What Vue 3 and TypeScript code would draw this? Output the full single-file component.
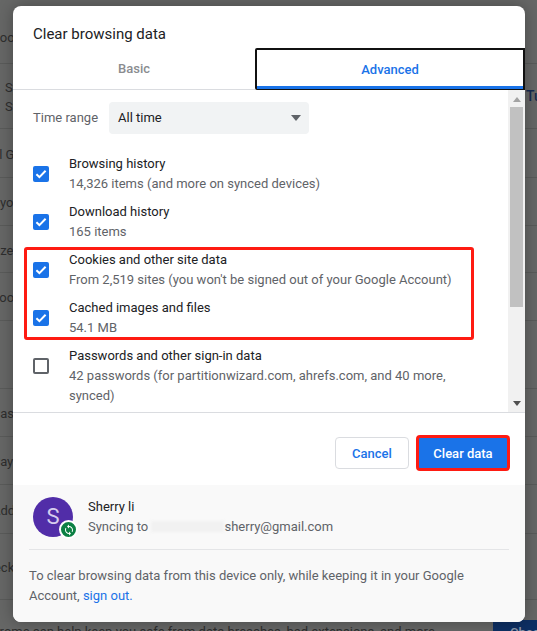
<script setup lang="ts">
interface BgRow { h: number; pad: number; lines: { text: string; x: number }[]; aside?: string }
const bgRows: BgRow[] = [
  { h: 64, pad: 12, lines: [{ text: 'Google', x: -9 }] },
  { h: 65, pad: 2, lines: [{ text: 'Sync', x: 5 }, { text: 'Sync', x: 5 }], aside: 'Turn' },
  { h: 49, pad: 2, lines: [{ text: 'll Google', x: -4 }] },
  { h: 48, pad: 2, lines: [{ text: 'your', x: 0 }] },
  { h: 47, pad: 2, lines: [{ text: 'ize', x: -3 }] },
  { h: 48, pad: 2, lines: [{ text: 'book', x: -8 }] },
  { h: 68, pad: 0, lines: [] },
  { h: 48, pad: 2, lines: [{ text: 'Pass', x: -8 }] },
  { h: 48, pad: 2, lines: [{ text: 'Payment', x: -8 }] },
  { h: 49, pad: 2, lines: [{ text: 'Address', x: -8 }] },
  { h: 66, pad: 2, lines: [{ text: 'check', x: -20 }] },
]
interface Item { title: string; sub: string; checked: boolean }
const items: Item[] = [
  { title: 'Browsing history', sub: '14,326 items (and more on synced devices)', checked: true },
  { title: 'Download history', sub: '165 items', checked: true },
  { title: 'Cookies and other site data', sub: "From 2,519 sites (you won't be signed out of your Google Account)", checked: true },
  { title: 'Cached images and files', sub: '54.1 MB', checked: true },
  { title: 'Passwords and other sign-in data', sub: '42 passwords (for partitionwizard.com, ahrefs.com, and 40 more, synced)', checked: false },
]
</script>

<template>
  <div class="page">
    <div class="bg">
      <div
        v-for="(row, i) in bgRows"
        :key="i"
        class="bg-row"
        :style="{ height: row.h + 'px', paddingTop: row.pad + 'px' }"
      >
        <div class="bg-lines">
          <div v-for="(l, j) in row.lines" :key="j" :style="{ marginLeft: l.x + 'px' }">{{ l.text }}</div>
        </div>
        <div v-if="row.aside" class="bg-aside">{{ row.aside }}</div>
      </div>
      <div class="bg-last">
        <div class="bg-sentence">Chrome can help keep you safe from data breaches, bad extensions, and more</div>
        <div class="bg-btn">Check</div>
      </div>
    </div>

    <div class="dialog">
      <div class="title">Clear browsing data</div>
      <div class="tabs">
        <div class="tab basic">Basic</div>
        <div class="tab advanced">Advanced</div>
      </div>

      <div class="scroll">
        <div class="content">
          <div class="range">
            <span class="range-label">Time range</span>
            <div class="select">
              <span>All time</span>
              <svg width="10" height="6" viewBox="0 0 10 6"><path d="M0 0h10L5 6z" fill="#5f6368" /></svg>
            </div>
          </div>
          <div class="items">
            <div v-for="item in items" :key="item.title" class="item">
              <div class="box" :class="{ on: item.checked }">
                <svg v-if="item.checked" width="16" height="16" viewBox="0 0 16 16">
                  <path d="M3.4 8.3l3 2.8 6.2-6.4" fill="none" stroke="#fff" stroke-width="2" />
                </svg>
              </div>
              <div class="item-text">
                <div class="item-title">{{ item.title }}</div>
                <div class="item-sub">{{ item.sub }}</div>
              </div>
            </div>
          </div>
        </div>
        <div class="frame"></div>
        <div class="bar">
          <svg class="arrow-up" width="8" height="5" viewBox="0 0 8 5"><path d="M0 5h8L4 0z" fill="#a3a3a3" /></svg>
          <div class="thumb"></div>
          <svg class="arrow-down" width="8" height="5" viewBox="0 0 8 5"><path d="M0 0h8L4 5z" fill="#505050" /></svg>
        </div>
      </div>

      <div class="actions">
        <button class="btn cancel">Cancel</button>
        <button class="btn clear">Clear data</button>
      </div>

      <div class="footer">
        <div class="account">
          <div class="avatar">
            S
            <div class="badge">
              <svg width="12" height="12" viewBox="0 0 24 24">
                <path fill="#fff" d="M12 4V1L8 5l4 4V6c3.31 0 6 2.69 6 6 0 1.01-.25 1.97-.7 2.8l1.46 1.46A7.93 7.93 0 0 0 20 12c0-4.42-3.58-8-8-8zm0 14c-3.31 0-6-2.69-6-6 0-1.01.25-1.97.7-2.8L5.24 7.74A7.93 7.93 0 0 0 4 12c0 4.42 3.58 8 8 8v3l4-4-4-4v3z" />
              </svg>
            </div>
          </div>
          <div class="who">
            <div class="name">Sherry li</div>
            <div class="sync">Syncing to <span class="smudge"></span>sherry@gmail.com</div>
          </div>
        </div>
        <div class="note">
          To clear browsing data from this device only, while keeping it in your Google Account,
          <span class="link">sign out.</span>
        </div>
      </div>
    </div>
  </div>
</template>

<style scoped>
.page {
  position: relative;
  width: 537px;
  height: 631px;
  overflow: hidden;
  background: #666766;
  font-family: Roboto, "Liberation Sans", sans-serif;
  font-size: 13px;
  color: #202124;
}
.bg { display: flex; flex-direction: column; color: #2e2e2e; }
.bg-row {
  box-sizing: border-box;
  display: flex;
  align-items: center;
  justify-content: space-between;
  border-bottom: 1px solid #5a5b5a;
  white-space: nowrap;
}
.bg-lines { width: 13px; overflow: hidden; line-height: 19px; }
.bg-aside {
  width: 11px;
  overflow: hidden;
  color: #14294f;
  font-size: 14px;
  font-weight: 500;
  margin-top: -2px;
}
.bg-last {
  display: flex;
  justify-content: space-between;
  white-space: nowrap;
  height: 32px;
  overflow: hidden;
}
.bg-sentence { margin-left: -16px; margin-top: 22px; line-height: 20px; }
.bg-btn {
  box-sizing: border-box;
  margin-top: 20px;
  width: 44px;
  height: 12px;
  padding-left: 17px;
  overflow: hidden;
  background: #0d2f63;
  color: #8b97ab;
  font-weight: 500;
  line-height: 26px;
}

.dialog {
  position: absolute;
  left: 13px;
  top: 6px;
  width: 512px;
  height: 616px;
  display: flex;
  flex-direction: column;
  background: #fff;
  border-radius: 8px;
  overflow: hidden;
  box-shadow: 0 0 16px rgba(0, 0, 0, 0.3);
}
.title {
  height: 42px;
  padding: 19px 0 0 20px;
  box-sizing: border-box;
  font-size: 15px;
  line-height: 18px;
}
.tabs { display: grid; grid-template-columns: 242px 270px; height: 42px; }
.tab {
  display: flex;
  align-items: center;
  justify-content: center;
  font-weight: 500;
  box-sizing: border-box;
}
.basic { color: #8a8c8f; border-bottom: 1px solid #dadce0; }
.advanced {
  color: #1a73e8;
  border: 2px solid #111;
  border-bottom: 1px solid #111;
  border-radius: 2px 0 0 2px;
  box-shadow: inset 0 -3px 0 #1a73e8;
}

.scroll { position: relative; height: 322px; display: flex; overflow: hidden; border-bottom: 1px solid #dadce0; }
.content { flex: 1; min-width: 0; padding-left: 20px; padding-right: 40px; }
.range { display: flex; align-items: center; margin-top: 12px; }
.range-label { width: 76px; color: #5f6368; padding-bottom: 1px; }
.select {
  box-sizing: border-box;
  width: 200px;
  height: 32px;
  padding: 0 8px 1px 9px;
  display: flex;
  align-items: center;
  justify-content: space-between;
  background: #f1f3f4;
  border-radius: 4px;
}
.select svg { margin-top: 1px; }
.items { display: flex; flex-direction: column; gap: 8px; margin-top: 20px; }
.item { display: flex; align-items: flex-start; }
.box {
  box-sizing: border-box;
  flex: none;
  width: 16px;
  height: 16px;
  margin-top: 12px;
  margin-right: 20px;
  border: 2px solid #5f6368;
  border-radius: 2px;
}
.box.on { border: none; background: #1a73e8; }
.box.on svg { display: block; }
.item-text { line-height: 20px; }
.item-sub { color: #5f6368; }

.frame {
  position: absolute;
  left: 11px;
  top: 157px;
  width: 450px;
  height: 93px;
  box-sizing: border-box;
  border: 3px solid #fe1b12;
  border-radius: 3px;
}

.bar {
  flex: none;
  width: 17px;
  background: #f1f1f1;
  display: flex;
  flex-direction: column;
  align-items: center;
}
.arrow-up { margin-top: 7px; }
.thumb { width: 13px; height: 200px; margin-top: 5px; background: #c1c1c1; }
.arrow-down { margin-top: auto; margin-bottom: 6px; }

.actions {
  height: 72px;
  box-sizing: border-box;
  padding: 8px 15px 0 0;
  display: flex;
  align-items: center;
  justify-content: flex-end;
  gap: 7px;
}
.btn {
  box-sizing: border-box;
  font: 500 13px Roboto, "Liberation Sans", sans-serif;
  border-radius: 4px;
  padding: 0;
}
.cancel { width: 74px; height: 32px; background: #fff; color: #1a73e8; border: 1px solid #dadce0; }
.clear { width: 94px; height: 36px; background: #1a73e8; color: #fff; border: 3px solid #fe1b12; }

.footer { flex: 1; background: #f9f9f9; padding: 12px 16px 0; }
.account {
  display: flex;
  gap: 15px;
  height: 52px;
  padding-left: 4px;
  border-bottom: 1px solid #e4e5e7;
}
.avatar {
  position: relative;
  flex: none;
  width: 40px;
  height: 40px;
  border-radius: 50%;
  background: #512da8;
  color: #d6cdee;
  font-size: 22px;
  line-height: 40px;
  text-align: center;
}
.badge {
  position: absolute;
  left: 26px;
  top: 23px;
  width: 15px;
  height: 15px;
  border: 2px solid #fff;
  border-radius: 50%;
  background: #0b8043;
  display: flex;
  align-items: center;
  justify-content: center;
}
.who { line-height: 20px; }
.sync { color: #5f6368; white-space: nowrap; }
.smudge {
  display: inline-block;
  width: 73px;
  height: 11px;
  vertical-align: -1px;
  background: #f1f1f1;
  filter: blur(1.5px);
}
.note { margin-top: 16px; line-height: 20px; color: #5f6368; }
.link { color: #1a73e8; }
</style>

<style>
html, body { margin: 0; background: #666766; }
</style>
